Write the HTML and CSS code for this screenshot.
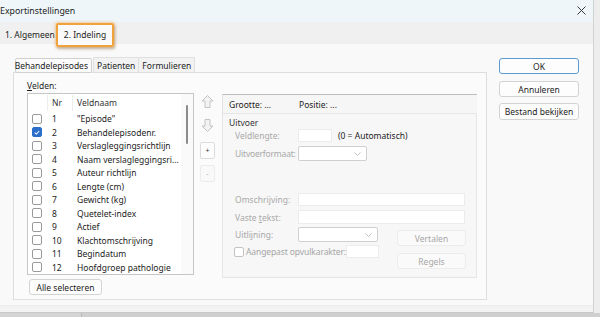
FILE: index.html
```html
<!DOCTYPE html>
<html lang="nl">
<head>
<meta charset="utf-8">
<title>Exportinstellingen</title>
<link rel="stylesheet" href="styles.css">
</head>
<body>
<div class="screen">
  <div class="window">
    <div class="titlebar">
      <span class="title">Exportinstellingen</span>
      <svg class="close" width="9" height="9" viewBox="0 0 9 9"><path d="M0.5 0.5 L8.5 8.5 M8.5 0.5 L0.5 8.5" stroke="#3a3a3a" stroke-width="1" fill="none"/></svg>
    </div>
    <div class="tabstrip">
      <span class="otab">1. Algemeen</span>
      <span class="otab active">2. Indeling<span class="highlight"></span></span>
    </div>
    <div class="body">
      <div class="main">
        <div class="itabs">
          <span class="itab sel">Behandelepisodes</span>
          <span class="itab">Patienten</span>
          <span class="itab">Formulieren</span>
        </div>
        <div class="page">
          <div class="leftcol">
            <div class="velden"><u>V</u>elden:</div>
            <div class="list">
              <div class="list-inner">
                <div class="lhead"><span class="c-chk"></span><span class="c-nr">Nr</span><span class="c-name">Veldnaam</span></div>
                <div class="row"><span class="c-chk"><span class="cb"></span></span><span class="c-nr">1</span><span class="c-name">"Episode"</span></div>
                <div class="row"><span class="c-chk"><span class="cb on"><svg width="9" height="9" viewBox="0 0 9 9"><path d="M2 4.6 L3.8 6.3 L7 2.8" stroke="#fff" stroke-width="1.2" fill="none"/></svg></span></span><span class="c-nr">2</span><span class="c-name">Behandelepisodenr.</span></div>
                <div class="row"><span class="c-chk"><span class="cb"></span></span><span class="c-nr">3</span><span class="c-name">Verslagleggingsrichtlijn</span></div>
                <div class="row"><span class="c-chk"><span class="cb"></span></span><span class="c-nr">4</span><span class="c-name">Naam verslagleggingsri...</span></div>
                <div class="row"><span class="c-chk"><span class="cb"></span></span><span class="c-nr">5</span><span class="c-name">Auteur richtlijn</span></div>
                <div class="row"><span class="c-chk"><span class="cb"></span></span><span class="c-nr">6</span><span class="c-name">Lengte (cm)</span></div>
                <div class="row"><span class="c-chk"><span class="cb"></span></span><span class="c-nr">7</span><span class="c-name">Gewicht (kg)</span></div>
                <div class="row"><span class="c-chk"><span class="cb"></span></span><span class="c-nr">8</span><span class="c-name">Quetelet-index</span></div>
                <div class="row"><span class="c-chk"><span class="cb"></span></span><span class="c-nr">9</span><span class="c-name">Actief</span></div>
                <div class="row"><span class="c-chk"><span class="cb"></span></span><span class="c-nr">10</span><span class="c-name">Klachtomschrijving</span></div>
                <div class="row"><span class="c-chk"><span class="cb"></span></span><span class="c-nr">11</span><span class="c-name">Begindatum</span></div>
                <div class="row"><span class="c-chk"><span class="cb"></span></span><span class="c-nr">12</span><span class="c-name">Hoofdgroep pathologie</span></div>
              </div>
              <div class="scroll"><div class="thumb"></div></div>
            </div>
            <button class="btn alle">Alle selecteren</button>
          </div>
          <div class="arrows">
            <svg class="arr" width="15" height="15" viewBox="0 0 15 15"><path d="M7.5 1.5 L13 7 L10 7 L10 13.5 L5 13.5 L5 7 L2 7 Z" fill="#f3f3f3" stroke="#c4c4c4" stroke-width="1"/></svg>
            <svg class="arr down" width="15" height="15" viewBox="0 0 15 15"><path d="M7.5 13.5 L13 8 L10 8 L10 1.5 L5 1.5 L5 8 L2 8 Z" fill="#f3f3f3" stroke="#c4c4c4" stroke-width="1"/></svg>
            <span class="sbtn plus">+</span>
            <span class="sbtn minus">-</span>
          </div>
          <div class="rightcol">
            <div class="info"><span class="grootte">Grootte: ...</span><span>Positie: ...</span></div>
            <div class="group">
              <div class="legend">Uitvoer</div>
              <div class="frow r1"><span class="flabel">Veldlengte:</span><span class="inp w34"></span><span class="hint">(0 = Automatisch)</span></div>
              <div class="frow r2"><span class="flabel tight">Uitvoerformaat:</span><span class="sel w69"><svg width="7" height="4" viewBox="0 0 7 4"><path d="M0.5 0.5 L3.5 3.5 L6.5 0.5" stroke="#c0c0c0" fill="none"/></svg></span></div>
              <div class="frow r3"><span class="flabel">Omschrijving:</span><span class="inp w167"></span></div>
              <div class="frow r4"><span class="flabel"><span>Vaste <u>t</u>ekst:</span></span><span class="inp w167 h14"></span></div>
              <div class="lower">
                <div class="lowerleft">
                  <div class="frow r5"><span class="flabel">Uitlijning:</span><span class="sel w80"><svg width="7" height="4" viewBox="0 0 7 4"><path d="M0.5 0.5 L3.5 3.5 L6.5 0.5" stroke="#c0c0c0" fill="none"/></svg></span></div>
                  <div class="frow r6"><span class="cb dis"></span><span class="cblabel">Aangepast opvulkarakter:</span><span class="inp w33"></span></div>
                </div>
                <div class="lowerright">
                  <span class="btn dis">Vertalen</span>
                  <span class="btn dis">Regels</span>
                </div>
              </div>
            </div>
          </div>
        </div>
      </div>
      <div class="side">
        <span class="btn ok">OK</span>
        <span class="btn">Annuleren</span>
        <span class="btn tall">Bestand bekijken</span>
      </div>
    </div>
    <div class="footer"></div>
  </div>
  <div class="taskbar"><span class="tb1"></span><span class="tb2"></span></div>
</div>
</body>
</html>
```

FILE: styles.css
```css
* { box-sizing: border-box; }
body {
  margin: 0;
  font-family: "Noto Sans", "Open Sans", sans-serif;
  font-size: 8.5px;
  color: #1c1c1c;
}
.screen {
  width: 600px;
  height: 317px;
  overflow: hidden;
  background: #ededed;
  display: flex;
  flex-direction: column;
}
.window {
  width: 594px;
  height: 313px;
  flex: none;
  background: #f2f2f2;
  border-right: 1px solid #d2d2d2;
  display: flex;
  flex-direction: column;
}
.titlebar {
  height: 22px;
  flex: none;
  background: #eef6fa;
  display: flex;
  align-items: center;
  justify-content: space-between;
  padding: 0 7px 0 0;
}
.title {
  margin-left: 0;
  color: #222;
  font-size: 8.8px;
}
.close { display: block; margin-top: -2px; }
.tabstrip {
  height: 22px;
  flex: none;
  background: #f0f0f0;
  display: flex;
  align-items: flex-end;
  padding-left: 5px;
  position: relative;
  z-index: 2;
}
.otab {
  height: 22px;
  display: flex;
  align-items: center;
  padding-top: 2px;
  white-space: nowrap;
}
.otab.active {
  position: relative;
  margin-left: 3px;
  height: 22px;
  margin-bottom: -2px;
  padding: 0 0 2px 6px;
  background: #fafafa;
  width: 54px;
}
.highlight {
  position: absolute;
  left: -2px;
  top: -1px;
  right: -2px;
  bottom: -1px;
  border: 2px solid #f0a23c;
  border-radius: 2px;
  box-shadow: 0 0 3px 1px rgba(240, 162, 60, 0.45), 1px 2px 3px rgba(0,0,0,0.25);
}
.body {
  flex: 1;
  background: #f9f9f9;
  display: flex;
  align-items: flex-start;
  padding: 13px 0 0 13px;
  border-bottom: 1px solid #ececec;
}
.main { display: flex; flex-direction: column; width: 474px; }
.itabs { display: flex; height: 15px; padding-left: 2px; }
.itab {
  display: flex;
  align-items: center;
  padding: 0 3px;
  height: 15px;
  background: #f2f2f2;
  border: 1px solid #e0e0e0;
  border-bottom: none;
  margin-right: -1px;
  white-space: nowrap;
}
.itab.sel {
  background: #fbfbfb;
  padding: 0 3px 0 4px;
  width: 77px;
  margin-right: 1px;
  position: relative;
  top: 1px;
}
.page {
  height: 228px;
  background: #fbfbfb;
  border: 1px solid #dedede;
  display: flex;
  align-items: flex-start;
  padding: 7px 0 0 13px;
}
.leftcol { width: 167px; display: flex; flex-direction: column; }
.velden { height: 13px; line-height: 11px; }
.list {
  height: 182px;
  background: #fff;
  border: 1px solid #c6c6c6;
  display: flex;
}
.list-inner { flex: 1; display: flex; flex-direction: column; }
.lhead {
  height: 18px;
  display: flex;
  align-items: center;
  color: #333;
}
.lhead .c-nr, .lhead .c-name { border-left: 1px solid #ededed; height: 16px; display: flex; align-items: center; }
.lhead .c-chk { height: 16px; }
.row { height: 13.7px; display: flex; align-items: center; }
.c-chk { width: 19px; flex: none; display: flex; align-items: center; padding-left: 4px; }
.c-nr { width: 25px; flex: none; padding-left: 5px; }
.c-name { flex: 1; padding-left: 5px; white-space: nowrap; overflow: hidden; }
.lhead .c-nr { padding-left: 4px; }
.lhead .c-name { padding-left: 4px; }
.cb {
  width: 10px;
  height: 10px;
  border: 1px solid #9a9a9a;
  border-radius: 2px;
  background: #fff;
  display: flex;
  align-items: center;
  justify-content: center;
  flex: none;
}
.cb.on { background: #2b6fcb; border-color: #2b6fcb; }
.cb svg { display: block; }
.scroll {
  width: 12px;
  flex: none;
  background: #fafafa;
  display: flex;
  justify-content: center;
  padding-top: 11px;
}
.thumb { width: 2px; height: 39px; background: #8c8c8c; border-radius: 1px; }
.btn {
  font-family: inherit;
  font-size: 8.5px;
  color: #1c1c1c;
  background: #fdfdfd;
  border: 1px solid #d3d3d3;
  border-radius: 3px;
  display: flex;
  align-items: center;
  justify-content: center;
  height: 16px;
  padding: 0;
  white-space: nowrap;
}
.alle { width: 73px; height: 16px; margin: 4px 0 0 2px; }
.arrows {
  width: 15px;
  margin-left: 6px;
  padding-top: 14px;
  display: flex;
  flex-direction: column;
  align-items: center;
}
.arr { display: block; }
.arr.down { margin-top: 9px; }
.sbtn {
  width: 15px;
  height: 17px;
  border: 1px solid #dcdcdc;
  border-radius: 2px;
  background: #fdfdfd;
  display: flex;
  align-items: center;
  justify-content: center;
  font-size: 7px;
  color: #333;
}
.plus { margin-top: 9px; }
.minus { margin-top: 6px; border-color: #ececec; color: #aaa; background: #f9f9f9; }
.rightcol {
  width: 255px;
  margin-left: 7px;
  padding-top: 14px;
  display: flex;
  flex-direction: column;
}
.info {
  height: 19px;
  border-top: 1px solid #bcbcbc;
  border-left: 1px solid #e2e2e2;
  background: #f6f6f6;
  display: flex;
  align-items: center;
  padding-left: 6px;
  color: #222;
}
.grootte { width: 70px; }
.group {
  height: 165px;
  border: 1px solid #e6e6e6;
  background: #f7f7f7;
  padding-left: 12px;
  display: flex;
  flex-direction: column;
}
.legend { height: 12px; margin: 3px 0 0 -6px; color: #333; line-height: 12px; }
.frow { display: flex; align-items: center; color: #a9a9a9; }
.flabel { width: 63px; flex: none; white-space: nowrap; }
.flabel.tight { letter-spacing: -0.2px; }
.r1 { height: 13px; }
.r2 { height: 15px; margin-top: 4px; }
.r3 { height: 13px; margin-top: 32px; }
.r4 { height: 14px; margin-top: 4px; }
.r5 { height: 15px; margin-top: 3px; }
.r6 { height: 13px; margin-top: 3px; }
.inp { height: 13px; background: #fff; border: 1px solid #ececec; display: block; flex: none; }
.h14 { height: 14px; }
.w34 { width: 34px; }
.w33 { width: 33px; }
.w167 { width: 167px; }
.hint { color: #1c1c1c; margin-left: 6px; }
.sel {
  height: 15px;
  background: #fff;
  border: 1px solid #d0d0d0;
  border-radius: 2px;
  display: flex;
  align-items: center;
  justify-content: flex-end;
  padding-right: 5px;
  flex: none;
}
.sel svg { display: block; }
.w69 { width: 69px; }
.w80 { width: 80px; }
.lower { display: flex; }
.lowerleft { width: 143px; display: flex; flex-direction: column; }
.cb.dis { border-color: #c4c4c4; margin-left: -1px; }
.cblabel { color: #a6a6a6; margin-left: 2px; flex: 1; white-space: nowrap; letter-spacing: -0.1px; }
.lowerright {
  margin-left: 19px;
  padding-top: 6px;
  display: flex;
  flex-direction: column;
  gap: 7px;
}
.btn.dis { width: 69px; height: 16px; color: #a6a6a6; border-color: #ececec; background: #fafafa; }
.side {
  width: 80px;
  margin: 1px 0 0 12px;
  display: flex;
  flex-direction: column;
  gap: 7px;
}
.side .btn { width: 80px; }
.btn.ok { border-color: #5e9bd0; }
.btn.tall { height: 17px; margin-top: -1px; }
.footer { height: 7px; flex: none; background: #f3f3f3; border-bottom: 1px solid #c9c9c9; }
.taskbar { height: 4px; flex: none; display: flex; background: #cfcfcf; }
.tb1 { width: 82px; border-right: 1px solid #b8b8b8; background: #d4d4d4; }
.tb2 { flex: 1; }
```
